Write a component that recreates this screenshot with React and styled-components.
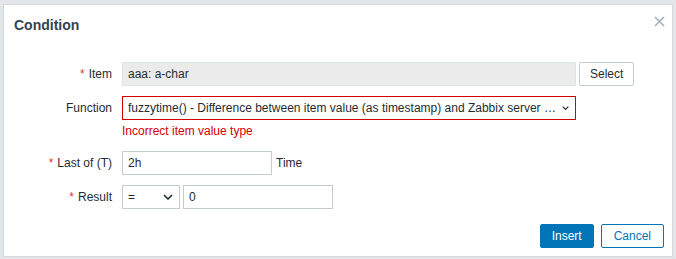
import React from 'react';
import styled, { createGlobalStyle } from 'styled-components';

const GlobalStyle = createGlobalStyle`
    body {
        margin: 0;
        font-family: "Liberation Sans", Arial, sans-serif;
        font-size: 12px;
        color: #1f2c33;
    }
`;

const Chevron = () => (
    <svg width="10" height="6" viewBox="0 0 10 6">
        <polyline points="1,1 5,5 9,1" fill="none" stroke="#1f2c33" strokeWidth="1.6" />
    </svg>
);

const Backdrop = styled.div`
    width: 676px;
    height: 259px;
    box-sizing: border-box;
    padding: 4px 3px 2px 3px;
    background: #e3e6e8;
`;

const Dialog = styled.div`
    position: relative;
    height: 100%;
    box-sizing: border-box;
    background: #fff;
    border: 1px solid #d3d9dd;
    display: flex;
    flex-direction: column;
`;

const Title = styled.h4`
    margin: 0;
    padding: 11px 10px 0;
    font-size: 14px;
    line-height: 18px;
    font-weight: bold;
    color: #34444f;
`;

const Close = styled.button`
    position: absolute;
    top: 8px;
    right: 5px;
    width: 16px;
    height: 16px;
    padding: 0;
    border: none;
    background: none;
    display: flex;
    align-items: center;
    justify-content: center;
`;

const Form = styled.div`
    margin-top: 28px;
    display: grid;
    grid-template-columns: 108px 1fr;
    column-gap: 10px;
    row-gap: 10px;
    align-items: start;
`;

const Label = styled.div`
    text-align: right;
    line-height: 24px;
    white-space: nowrap;

    span {
        color: #e33734;
        margin-right: 4px;
    }
`;

const Field = styled.div`
    display: flex;
    align-items: center;
    gap: 3px;
`;

const FieldColumn = styled.div`
    display: flex;
    flex-direction: column;
`;

const Input = styled.div`
    box-sizing: border-box;
    width: ${p => p.width}px;
    height: 24px;
    line-height: 22px;
    padding: 0 5px;
    border: 1px solid ${p => p.readOnly ? '#dfe4e7' : '#c5ccd0'};
    background: ${p => p.readOnly ? '#ebebeb' : '#fff'};
    white-space: nowrap;
`;

const Select = styled.div`
    box-sizing: border-box;
    width: ${p => p.width}px;
    height: 24px;
    padding: 0 6px 0 5px;
    border: 1px solid ${p => p.error ? '#d40000' : '#c5ccd0'};
    background: #fff;
    display: flex;
    align-items: center;
    justify-content: space-between;
    gap: 6px;

    .value {
        white-space: nowrap;
    }
`;

const Button = styled.button`
    box-sizing: border-box;
    height: 24px;
    padding: 0 ${p => p.pad}px;
    font-family: inherit;
    font-size: 12px;
    border-radius: 2px;
    border: 1px solid ${p => p.variant ? '#0275b8' : '#c5ccd0'};
    background: ${p => p.variant === 'primary' ? '#0275b8' : '#fff'};
    color: ${p => p.variant === 'primary' ? '#fff' : p.variant === 'outline' ? '#0275b8' : '#1f2c33'};
`;

const Error = styled.div`
    color: #d40000;
    line-height: 14px;
    margin: 4px 0 3px;
`;

const Suffix = styled.span`
    margin-left: 1px;
`;

const Footer = styled.div`
    margin-top: auto;
    padding: 0 8px 8px 0;
    display: flex;
    justify-content: flex-end;
    gap: 7px;
`;

const Req = ({ children }) => (
    <Label><span>*</span>{children}</Label>
);

const App = () => {
    return (
        <>
            <GlobalStyle />
            <Backdrop>
                <Dialog>
                    <Title>Condition</Title>
                    <Close>
                        <svg width="11" height="11" viewBox="0 0 11 11">
                            <path d="M1 1L10 10M10 1L1 10" stroke="#a9b2b8" strokeWidth="1.6" />
                        </svg>
                    </Close>
                    <Form>
                        <Req>Item</Req>
                        <Field>
                            <Input width={454} readOnly>aaa: a-char</Input>
                            <Button pad={10}>Select</Button>
                        </Field>

                        <Label>Function</Label>
                        <FieldColumn>
                            <Select width={454} error>
                                <span className="value">fuzzytime() - Difference between item value (as timestamp) and Zabbix server …</span>
                                <Chevron />
                            </Select>
                            <Error>Incorrect item value type</Error>
                        </FieldColumn>

                        <Req>Last of (T)</Req>
                        <Field>
                            <Input width={150}>2h</Input>
                            <Suffix>Time</Suffix>
                        </Field>

                        <Req>Result</Req>
                        <Field>
                            <Select width={58}>
                                <span className="value">=</span>
                                <Chevron />
                            </Select>
                            <Input width={150}>0</Input>
                        </Field>
                    </Form>
                    <Footer>
                        <Button variant="primary" pad={11}>Insert</Button>
                        <Button variant="outline" pad={12}>Cancel</Button>
                    </Footer>
                </Dialog>
            </Backdrop>
        </>
    );
};

export default App;
